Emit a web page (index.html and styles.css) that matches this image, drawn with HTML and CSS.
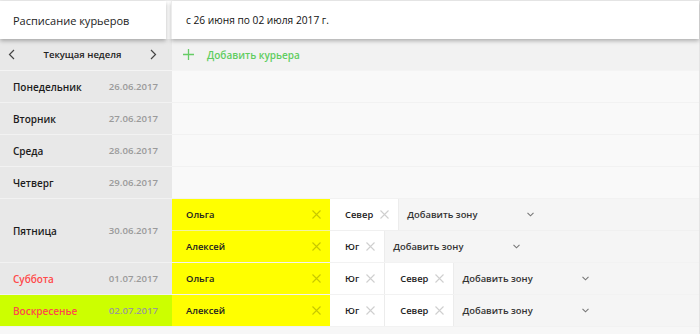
FILE: index.html
```html
<!DOCTYPE html>
<html lang="ru">
<head>
<meta charset="utf-8">
<link rel="stylesheet" href="styles.css">
</head>
<body>
<div class="app">
  <header class="header">
    <div class="title">Расписание курьеров</div>
    <div class="range">с 26 июня по 02 июля 2017 г.</div>
  </header>
  <div class="toolbar">
    <div class="week">
      <svg class="arrow" width="7" height="11" viewBox="0 0 7 11"><path d="M6 1 L1.5 5.5 L6 10" fill="none" stroke="#444" stroke-width="1.2"/></svg>
      <span class="week-label">Текущая неделя</span>
      <svg class="arrow" width="7" height="11" viewBox="0 0 7 11"><path d="M1 1 L5.5 5.5 L1 10" fill="none" stroke="#444" stroke-width="1.2"/></svg>
    </div>
    <div class="add-courier">
      <svg width="11" height="11" viewBox="0 0 11 11"><path d="M5.5 0 V11 M0 5.5 H11" stroke="#66cc66" stroke-width="1.3"/></svg>
      <span>Добавить курьера</span>
    </div>
  </div>

  <div class="day">
    <div class="day-cell"><span class="name">Понедельник</span><span class="date">26.06.2017</span></div>
    <div class="lines"><div class="line empty"></div></div>
  </div>
  <div class="day">
    <div class="day-cell"><span class="name">Вторник</span><span class="date">27.06.2017</span></div>
    <div class="lines"><div class="line empty"></div></div>
  </div>
  <div class="day">
    <div class="day-cell"><span class="name">Среда</span><span class="date">28.06.2017</span></div>
    <div class="lines"><div class="line empty"></div></div>
  </div>
  <div class="day">
    <div class="day-cell"><span class="name">Четверг</span><span class="date">29.06.2017</span></div>
    <div class="lines"><div class="line empty"></div></div>
  </div>
  <div class="day">
    <div class="day-cell"><span class="name">Пятница</span><span class="date">30.06.2017</span></div>
    <div class="lines">
      <div class="line">
        <div class="courier"><span>Ольга</span><svg class="x" width="9" height="9" viewBox="0 0 9 9"><path d="M0.5 0.5 L8.5 8.5 M8.5 0.5 L0.5 8.5"/></svg></div>
        <div class="zone"><span>Север</span><svg class="x" width="9" height="9" viewBox="0 0 9 9"><path d="M0.5 0.5 L8.5 8.5 M8.5 0.5 L0.5 8.5"/></svg></div>
        <div class="add-zone"><span>Добавить зону</span><svg class="chev" width="7" height="5" viewBox="0 0 7 5"><path d="M0.5 0.8 L3.5 3.8 L6.5 0.8"/></svg></div>
      </div>
      <div class="line">
        <div class="courier"><span>Алексей</span><svg class="x" width="9" height="9" viewBox="0 0 9 9"><path d="M0.5 0.5 L8.5 8.5 M8.5 0.5 L0.5 8.5"/></svg></div>
        <div class="zone"><span>Юг</span><svg class="x" width="9" height="9" viewBox="0 0 9 9"><path d="M0.5 0.5 L8.5 8.5 M8.5 0.5 L0.5 8.5"/></svg></div>
        <div class="add-zone"><span>Добавить зону</span><svg class="chev" width="7" height="5" viewBox="0 0 7 5"><path d="M0.5 0.8 L3.5 3.8 L6.5 0.8"/></svg></div>
      </div>
    </div>
  </div>
  <div class="day">
    <div class="day-cell"><span class="name weekend">Суббота</span><span class="date">01.07.2017</span></div>
    <div class="lines">
      <div class="line">
        <div class="courier"><span>Ольга</span><svg class="x" width="9" height="9" viewBox="0 0 9 9"><path d="M0.5 0.5 L8.5 8.5 M8.5 0.5 L0.5 8.5"/></svg></div>
        <div class="zone"><span>Юг</span><svg class="x" width="9" height="9" viewBox="0 0 9 9"><path d="M0.5 0.5 L8.5 8.5 M8.5 0.5 L0.5 8.5"/></svg></div>
        <div class="zone"><span>Север</span><svg class="x" width="9" height="9" viewBox="0 0 9 9"><path d="M0.5 0.5 L8.5 8.5 M8.5 0.5 L0.5 8.5"/></svg></div>
        <div class="add-zone"><span>Добавить зону</span><svg class="chev" width="7" height="5" viewBox="0 0 7 5"><path d="M0.5 0.8 L3.5 3.8 L6.5 0.8"/></svg></div>
      </div>
    </div>
  </div>
  <div class="day">
    <div class="day-cell today"><span class="name weekend">Воскресенье</span><span class="date">02.07.2017</span></div>
    <div class="lines">
      <div class="line">
        <div class="courier"><span>Алексей</span><svg class="x" width="9" height="9" viewBox="0 0 9 9"><path d="M0.5 0.5 L8.5 8.5 M8.5 0.5 L0.5 8.5"/></svg></div>
        <div class="zone"><span>Юг</span><svg class="x" width="9" height="9" viewBox="0 0 9 9"><path d="M0.5 0.5 L8.5 8.5 M8.5 0.5 L0.5 8.5"/></svg></div>
        <div class="zone"><span>Север</span><svg class="x" width="9" height="9" viewBox="0 0 9 9"><path d="M0.5 0.5 L8.5 8.5 M8.5 0.5 L0.5 8.5"/></svg></div>
        <div class="add-zone"><span>Добавить зону</span><svg class="chev" width="7" height="5" viewBox="0 0 7 5"><path d="M0.5 0.8 L3.5 3.8 L6.5 0.8"/></svg></div>
      </div>
    </div>
  </div>
  <div class="footer"></div>
</div>
</body>
</html>
```

FILE: styles.css
```css
* { box-sizing: border-box; }
html, body { margin: 0; padding: 0; }
body {
  font-family: "Open Sans", "Liberation Sans", sans-serif;
  color: #222;
  background: #f7f7f7;
  width: 700px;
  height: 334px;
  overflow: hidden;
}
.app {
  width: 700px;
  border-top: 1px solid #ececec;
  border-right: 1px solid #e4e4e4;
}
.header {
  display: flex;
  height: 38px;
  background: #fff;
  position: relative;
  z-index: 2;
}
.title {
  width: 166px;
  padding-left: 13px;
  display: flex;
  align-items: center;
  font-size: 11px;
  color: #222;
  box-shadow: 0 2px 4px rgba(0,0,0,0.28);
  margin-right: 5px;
}
.range {
  flex: 1;
  border-left: 1px solid #ececec;
  padding-left: 14px;
  display: flex;
  align-items: center;
  font-size: 10.2px;
  color: #111;
  box-shadow: 0 2px 4px rgba(0,0,0,0.28);
}
.toolbar {
  display: flex;
  height: 32px;
  border-bottom: 1px solid #f4f4f4;
}
.week {
  width: 172px;
  background: #e8e8e8;
  display: flex;
  align-items: center;
  justify-content: space-between;
  padding: 0 15px 0 8px;
  font-size: 9.5px;
  font-weight: 600;
}
.week-label { color: #222; }
.add-courier {
  flex: 1;
  background: #f2f2f2;
  display: flex;
  align-items: center;
  padding-left: 11px;
  gap: 13px;
  font-size: 10px;
  font-weight: 600;
  color: #5fcd5f;
}
.day {
  display: flex;
  border-bottom: 1px solid #f2f2f2;
}
.day-cell {
  width: 172px;
  background: #e8e8e8;
  display: flex;
  align-items: center;
  justify-content: space-between;
  padding: 0 14px 0 13px;
}
.day-cell.today { background: #ccff00; }
.name { color: #1c1c1c; font-size: 10px; font-weight: 600; }
.name.weekend { color: #ff4a4a; }
.date { color: #9a9a9a; font-size: 9.6px; font-weight: 600; }
.lines {
  flex: 1;
  display: flex;
  flex-direction: column;
}
.line {
  height: 31px;
  display: flex;
  background: #f5f5f5;
  font-size: 9.4px;
  font-weight: 600;
}
.line + .line { border-top: 1px solid #f0f0f0; height: 32px; }
.line.empty { background: #f9f9f9; }
.courier {
  width: 158px;
  background: #ffff00;
  display: flex;
  align-items: center;
  justify-content: space-between;
  padding: 0 9px 0 14px;
}
.line + .line .courier { box-shadow: 0 -1px 0 #f2f2a0; }
.x path { stroke: rgba(0,0,0,0.22); stroke-width: 1.1; fill: none; }
.zone {
  background: #fff;
  display: flex;
  align-items: center;
  gap: 7px;
  padding: 0 9px 0 15px;
  border-right: 1px solid #ececec;
}
.zone .x path { stroke: #cfcfcf; }
.add-zone {
  width: 140px;
  display: flex;
  align-items: center;
  justify-content: space-between;
  padding: 0 5px 0 8px;
  color: #333;
}
.chev path { stroke: #777; stroke-width: 1.1; fill: none; }
.footer {
  height: 10px;
  background: #f7f7f7;
}
```
